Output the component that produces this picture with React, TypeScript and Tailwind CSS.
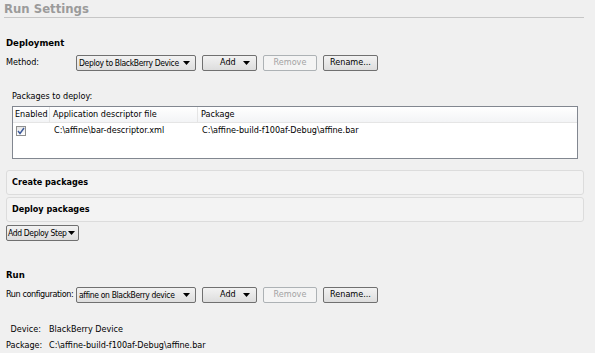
import React from 'react';

const Arrow = () => (
    <svg width="7" height="4" viewBox="0 0 7 4" className="shrink-0">
        <path d="M0 0h7L3.5 4z" fill="#000" />
    </svg>
);

const Combo = ({ label }: { label: string }) => (
    <div className="w-[120px] h-[16px] flex items-center justify-between pl-[2px] pr-[5px] border border-[#707070] rounded-[2px] bg-gradient-to-b from-[#f2f2f2] to-[#dedede] text-black overflow-hidden">
        <span className="text-[8.5px] tracking-[-0.35px]">{label}</span>
        <Arrow />
    </div>
);

const Btn = ({ children, disabled, w }: { children: React.ReactNode; disabled?: boolean; w: string }) => (
    <div
        className={
            disabled
                ? `${w} h-[16px] flex items-center justify-center border border-[#adb2b5] rounded-[2px] bg-[#f4f4f4] text-[#a3a3a3]`
                : `${w} h-[16px] flex items-center justify-center border border-[#707070] rounded-[2px] bg-gradient-to-b from-[#f2f2f2] to-[#dddddd] text-black`
        }
    >
        {children}
    </div>
);

const AddBtn = () => (
    <div className="w-[55px] h-[16px] flex items-center justify-between pl-[17px] pr-[6px] border border-[#707070] rounded-[2px] bg-gradient-to-b from-[#f2f2f2] to-[#dddddd] text-black">
        <span>Add</span>
        <Arrow />
    </div>
);

const StepPanel = ({ title }: { title: string }) => (
    <div className="h-[25px] flex items-center px-[5px] border border-[#dcdcdc] rounded-[3px] bg-[#f3f3f3] font-bold text-black">
        {title}
    </div>
);

export default function App() {
    return (
        <div
            className="w-[595px] h-[353px] bg-[#f0f0f0] overflow-hidden text-[9px] text-black whitespace-nowrap"
            style={{ fontFamily: '"DejaVu Sans Condensed", "Liberation Sans", sans-serif' }}
        >
            {/* Title */}
            <div className="pl-[4px] pr-[11px]">
                <div className="h-[18px] border-b border-[#c6c6c6] text-[13px] font-bold text-[#9b9b9b] leading-[17px]">
                    Run Settings
                </div>
            </div>

            {/* Deployment */}
            <div className="px-[6px] pt-[18px]">
                <div className="text-[9.5px] font-bold leading-[14px]">Deployment</div>
                <div className="mt-[5px] flex items-center gap-[6px]">
                    <span className="w-[64px]">Method:</span>
                    <Combo label="Deploy to BlackBerry Device" />
                    <AddBtn />
                    <Btn w="w-[54px]" disabled>Remove</Btn>
                    <Btn w="w-[55px]">Rename...</Btn>
                </div>

                <div className="mt-[19px] pl-[6px]">
                    <div className="leading-[12px]">Packages to deploy:</div>
                    <div className="mt-[4px] w-[566px] h-[53px] border border-[#828790] bg-white">
                        <div className="h-[16px] flex items-center bg-gradient-to-b from-white to-[#f3f4f6] border-b border-[#e5e5e5]">
                            <div className="w-[37px] pl-[2px] border-r border-[#e5e5e5] h-full flex items-center">Enabled</div>
                            <div className="w-[148px] pl-[3px] border-r border-[#e5e5e5] h-full flex items-center">Application descriptor file</div>
                            <div className="flex-1 pl-[3px] h-full flex items-center">Package</div>
                        </div>
                        <div className="h-[16px] flex items-center">
                            <div className="w-[37px] pl-[3px] flex items-center">
                                <div className="w-[10px] h-[10px] border border-[#8e8f8f] bg-gradient-to-b from-[#e6e6e6] to-white flex items-center justify-center">
                                    <svg width="8" height="8" viewBox="0 0 8 8">
                                        <path d="M1 4l2 2.5L7 1" stroke="#3c5a9a" strokeWidth="1.4" fill="none" />
                                    </svg>
                                </div>
                            </div>
                            <div className="w-[148px] pl-[4px]">C:\affine\bar-descriptor.xml</div>
                            <div className="flex-1 pl-[4px]">C:\affine-build-f100af-Debug\affine.bar</div>
                        </div>
                    </div>
                </div>

                <div className="mt-[11px] w-[578px] flex flex-col gap-[2px]">
                    <StepPanel title="Create packages" />
                    <StepPanel title="Deploy packages" />
                </div>

                <div className="mt-[3px] w-[73px] h-[16px] flex items-center justify-between pl-[1px] pr-[3px] border border-[#707070] rounded-[2px] bg-gradient-to-b from-[#f2f2f2] to-[#dddddd]">
                    <span className="text-[8.5px] tracking-[-0.35px]">Add Deploy Step</span>
                    <Arrow />
                </div>
            </div>

            {/* Run */}
            <div className="px-[6px] pt-[27px]">
                <div className="text-[9.5px] font-bold leading-[14px]">Run</div>
                <div className="mt-[5px] flex items-center gap-[6px]">
                    <span className="w-[64px] tracking-[-0.4px]">Run configuration:</span>
                    <Combo label="affine on BlackBerry device" />
                    <AddBtn />
                    <Btn w="w-[54px]" disabled>Remove</Btn>
                    <Btn w="w-[55px]">Rename...</Btn>
                </div>
                <div className="mt-[20px] grid grid-cols-[35px_1fr] gap-x-[8px] gap-y-[4px] leading-[12px]">
                    <span className="text-right">Device:</span>
                    <span>BlackBerry Device</span>
                    <span className="text-right">Package:</span>
                    <span>C:\affine-build-f100af-Debug\affine.bar</span>
                </div>
            </div>
        </div>
    );
}
